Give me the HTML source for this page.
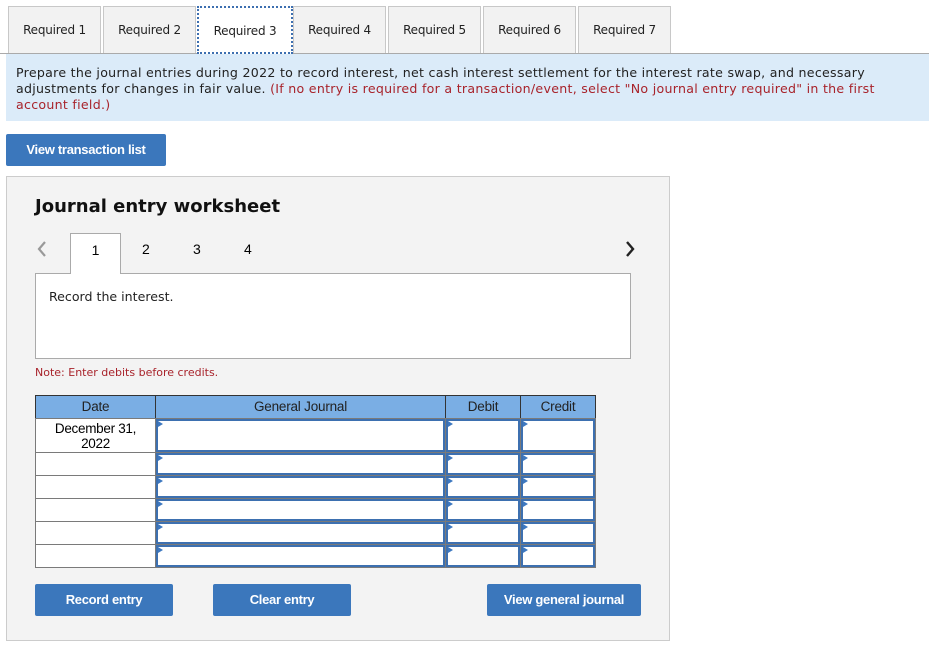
<!DOCTYPE html>
<html><head><style>
*{box-sizing:border-box;margin:0;padding:0}
body{width:941px;height:649px;background:#fff;position:relative;font-family:"DejaVu Sans","Liberation Sans",sans-serif;overflow:hidden}
.a{position:absolute}
.tab{position:absolute;top:6px;height:47px;width:93px;background:#f2f2f2;border:1px solid #c8c8c8;border-bottom:none;font-size:12px;color:#222;text-align:center;line-height:47px;letter-spacing:-0.2px}
.btn{position:absolute;background:#3b77bc;color:#fff;font-family:"Liberation Sans",Arial,sans-serif;font-weight:bold;font-size:13px;text-align:center;border-radius:2px;letter-spacing:-0.3px}
.c{position:absolute;border:1px solid #7a7a7a;background:#fff}
.in{position:absolute;border:2px solid #3d70b0;background:#fff}
.in:before{content:"";position:absolute;left:0;top:0;border-left:5px solid #3d78c0;border-top:3px solid transparent;border-bottom:3px solid transparent}
.h{position:absolute;top:395px;height:24px;background:#7aaee4;border:1px solid #333;font-family:"Liberation Sans",Arial,sans-serif;font-size:13.5px;letter-spacing:-0.2px;color:#222;text-align:center;line-height:22px}
</style></head><body>
<div class="a" style="left:0;top:53px;width:929px;height:1px;background:#aaa"></div>
<div class="tab" style="left:8px">Required 1</div>
<div class="tab" style="left:103px">Required 2</div>
<div class="tab" style="left:197px;width:96px;height:48px;background:#fff;border:2px dotted #3d6fb0;line-height:46px">Required 3</div>
<div class="tab" style="left:293px">Required 4</div>
<div class="tab" style="left:388px">Required 5</div>
<div class="tab" style="left:483px">Required 6</div>
<div class="tab" style="left:578px">Required 7</div>
<div class="a" style="left:6px;top:54px;width:923px;height:67px;background:#dbebf9;padding:11px 10px;font-size:12.6px;line-height:16px;color:#222;white-space:nowrap;letter-spacing:0.28px">Prepare the journal entries during 2022 to record interest, net cash interest settlement for the interest rate swap, and necessary<br>adjustments for changes in fair value. <span style="color:#a8232b">(If no entry is required for a transaction/event, select "No journal entry required" in the first<br>account field.)</span></div>
<div class="btn" style="left:6px;top:134px;width:160px;height:32px;line-height:32px">View transaction list</div>
<div class="a" style="left:6px;top:176px;width:664px;height:465px;background:#f3f3f3;border:1px solid #ccc"></div>
<div class="a" style="left:35px;top:196px;font-size:18px;font-weight:bold;color:#111">Journal entry worksheet</div>
<svg class="a" style="left:36px;top:240px" width="12" height="18"><path d="M9 2 L3 9 L9 16" stroke="#999" stroke-width="2.2" fill="none"/></svg>
<svg class="a" style="left:624px;top:240px" width="12" height="18"><path d="M3 2 L9 9 L3 16" stroke="#222" stroke-width="2.4" fill="none"/></svg>
<div class="a" style="left:35px;top:273px;width:596px;height:86px;background:#fff;border:1px solid #aaa"></div>
<div class="a" style="left:70px;top:233px;width:51px;height:41px;background:#fff;border:1px solid #aaa;border-bottom:none;text-align:center;line-height:32px;font-family:'Liberation Sans',Arial,sans-serif;font-size:14px">1</div>
<div class="a" style="left:142px;top:241px;font-family:'Liberation Sans',Arial,sans-serif;font-size:14px">2</div>
<div class="a" style="left:193px;top:241px;font-family:'Liberation Sans',Arial,sans-serif;font-size:14px">3</div>
<div class="a" style="left:244px;top:241px;font-family:'Liberation Sans',Arial,sans-serif;font-size:14px">4</div>
<div class="a" style="left:49px;top:289px;font-size:12.6px;color:#222">Record the interest.</div>
<div class="a" style="left:35px;top:366px;font-size:11px;color:#a8232b">Note: Enter debits before credits.</div>
<div class="h" style="left:35px;width:121px">Date</div>
<div class="h" style="left:155px;width:291px">General Journal</div>
<div class="h" style="left:445px;width:76px">Debit</div>
<div class="h" style="left:520px;width:76px">Credit</div>
<div class="c" style="left:35px;top:418px;width:121px;height:35px;font-family:'Liberation Sans',Arial,sans-serif;font-size:13.5px;letter-spacing:-0.3px;text-align:center;line-height:15px;padding-top:2px">December 31,<br>2022</div>
<div class="c" style="left:35px;top:452px;width:121px;height:24px"></div>
<div class="c" style="left:35px;top:475px;width:121px;height:24px"></div>
<div class="c" style="left:35px;top:498px;width:121px;height:24px"></div>
<div class="c" style="left:35px;top:521px;width:121px;height:24px"></div>
<div class="c" style="left:35px;top:544px;width:121px;height:24px"></div>
<div class="a" style="left:155px;top:418px;width:441px;height:150px;background:#7a7a7a"></div>
<div class="in" style="left:156px;top:419px;width:289px;height:33px"></div>
<div class="in" style="left:446px;top:419px;width:74px;height:33px"></div>
<div class="in" style="left:521px;top:419px;width:74px;height:33px"></div>
<div class="in" style="left:156px;top:453px;width:289px;height:22px"></div>
<div class="in" style="left:446px;top:453px;width:74px;height:22px"></div>
<div class="in" style="left:521px;top:453px;width:74px;height:22px"></div>
<div class="in" style="left:156px;top:476px;width:289px;height:22px"></div>
<div class="in" style="left:446px;top:476px;width:74px;height:22px"></div>
<div class="in" style="left:521px;top:476px;width:74px;height:22px"></div>
<div class="in" style="left:156px;top:499px;width:289px;height:22px"></div>
<div class="in" style="left:446px;top:499px;width:74px;height:22px"></div>
<div class="in" style="left:521px;top:499px;width:74px;height:22px"></div>
<div class="in" style="left:156px;top:522px;width:289px;height:22px"></div>
<div class="in" style="left:446px;top:522px;width:74px;height:22px"></div>
<div class="in" style="left:521px;top:522px;width:74px;height:22px"></div>
<div class="in" style="left:156px;top:545px;width:289px;height:22px"></div>
<div class="in" style="left:446px;top:545px;width:74px;height:22px"></div>
<div class="in" style="left:521px;top:545px;width:74px;height:22px"></div>
<div class="btn" style="left:35px;top:584px;width:138px;height:32px;line-height:32px">Record entry</div>
<div class="btn" style="left:213px;top:584px;width:138px;height:32px;line-height:32px">Clear entry</div>
<div class="btn" style="left:487px;top:584px;width:154px;height:32px;line-height:32px">View general journal</div>
</body></html>
